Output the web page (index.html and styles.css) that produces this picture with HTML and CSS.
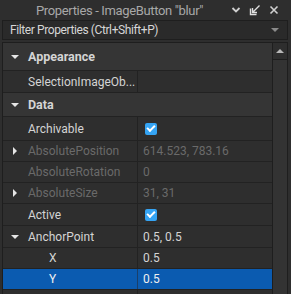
FILE: index.html
```html
<!DOCTYPE html>
<html lang="en">
<head>
  <meta charset="UTF-8" />
  <title>Properties</title>
  <link rel="stylesheet" href="styles.css">
</head>
<body>

<div class="panel">
  <div class="titlebar">
    <span class="title">Properties - ImageButton "blur"</span>
    <div class="title-icons">
      <svg width="10" height="8" viewBox="0 0 10 8"><path d="M1.5 2 L5 5.5 L8.5 2" fill="none" stroke="#d0d0d0" stroke-width="1.8"/></svg>
      <svg width="12" height="12" viewBox="0 0 12 12"><path d="M1.5 4.5 V10.5 H7.5" fill="none" stroke="#e0e0e0" stroke-width="1.4"/><path d="M3.5 8.5 L10.5 1.5 M3.5 4 V8.5 H8" fill="none" stroke="#e0e0e0" stroke-width="1.4"/></svg>
      <svg width="10" height="10" viewBox="0 0 10 10"><path d="M1.5 1.5 L8.5 8.5 M8.5 1.5 L1.5 8.5" fill="none" stroke="#d0d0d0" stroke-width="1.6"/></svg>
    </div>
  </div>

  <div class="filter">
    <span>Filter Properties (Ctrl+Shift+P)</span>
    <span class="filter-arrow"></span>
  </div>

  <div class="list">
    <div class="rows">
      <div class="row header h28">
        <div class="name"><span class="tri down"></span>Appearance</div>
      </div>
      <div class="row h22">
        <div class="name">SelectionImageOb...</div>
        <div class="value"></div>
      </div>
      <div class="row header h24">
        <div class="name"><span class="tri down"></span>Data</div>
      </div>
      <div class="row h24">
        <div class="name">Archivable</div>
        <div class="value"><span class="check"></span></div>
      </div>
      <div class="row muted">
        <div class="name"><span class="tri right"></span>AbsolutePosition</div>
        <div class="value">614.523, 783.16</div>
      </div>
      <div class="row muted">
        <div class="name">AbsoluteRotation</div>
        <div class="value">0</div>
      </div>
      <div class="row muted">
        <div class="name"><span class="tri right"></span>AbsoluteSize</div>
        <div class="value">31, 31</div>
      </div>
      <div class="row h22">
        <div class="name">Active</div>
        <div class="value"><span class="check"></span></div>
      </div>
      <div class="row h22">
        <div class="name"><span class="tri down"></span>AnchorPoint</div>
        <div class="value">0.5, 0.5</div>
      </div>
      <div class="row">
        <div class="name sub">X</div>
        <div class="value">0.5</div>
      </div>
      <div class="row selected">
        <div class="name sub">Y</div>
        <div class="value">0.5</div>
      </div>
      <div class="row">
        <div class="name"></div>
        <div class="value"></div>
      </div>
    </div>
    <div class="scrollbar">
      <div class="scroll-up"><span></span></div>
      <div class="scroll-track"></div>
    </div>
  </div>
</div>

</body>
</html>
```

FILE: styles.css
```css
html, body {
  margin: 0;
  padding: 0;
  background: #2e2e2e;
}

body {
  font-family: Roboto, 'Noto Sans', sans-serif;
  font-size: 12px;
  color: #d4d4d4;
  width: 291px;
  height: 294px;
  overflow: hidden;
}

* {
  box-sizing: border-box;
}

.panel {
  display: flex;
  flex-direction: column;
  height: 294px;
}

.titlebar {
  height: 20px;
  display: flex;
  align-items: center;
  background: #2e2e2e;
}

.title {
  padding-left: 36px;
  font-size: 13px;
  color: #a8a8a8;
  white-space: nowrap;
  letter-spacing: -0.35px;
}

.title-icons {
  margin-left: auto;
  display: flex;
  align-items: center;
  gap: 8px;
  padding-right: 12px;
}

.filter {
  margin: 0 3px 0 2px;
  height: 20px;
  border: 1px solid #1e1e1e;
  background: #2a2a2a;
  display: flex;
  align-items: center;
  padding-left: 7px;
  color: #d6d6d6;
  font-size: 12px;
  letter-spacing: -0.4px;
  white-space: nowrap;
}

.filter-arrow {
  margin-left: auto;
  margin-right: 8px;
  width: 0;
  height: 0;
  border-left: 4px solid transparent;
  border-right: 4px solid transparent;
  border-top: 4px solid #8a8a8a;
}

.list {
  margin: 2px 3px 0 2px;
  border: 1px solid #1e1e1e;
  border-bottom: none;
  display: flex;
  flex: 1;
  overflow: hidden;
}

.rows {
  flex: 1;
  display: flex;
  flex-direction: column;
}

.row {
  height: 21px;
  flex-shrink: 0;
  display: grid;
  grid-template-columns: 135px 1fr;
  border-bottom: 1px solid #222;
  background: #2e2e2e;
}

.row.h22 { height: 22px; }
.row.h24 { height: 24px; }
.row.h28 { height: 28px; }

.row.header {
  display: flex;
  background: #353535;
  font-weight: 700;
  font-size: 12.5px;
}

.name {
  display: flex;
  align-items: center;
  padding-left: 25px;
  position: relative;
  border-right: 1px solid #222;
  white-space: nowrap;
  overflow: hidden;
}

.row.header .name {
  border-right: none;
}

.name.sub {
  padding-left: 46px;
}

.value {
  display: flex;
  align-items: center;
  padding-left: 5px;
}

.muted {
  color: #6a6a6a;
}

.selected {
  background: #0b5bb0;
  color: #f0f0f0;
}

.selected .name {
  border-color: #1a3f6a;
}

.tri {
  position: absolute;
  left: 8px;
  width: 0;
  height: 0;
}

.tri.down {
  border-left: 4px solid transparent;
  border-right: 4px solid transparent;
  border-top: 4px solid #e6e6e6;
}

.tri.right {
  left: 10px;
  border-top: 4px solid transparent;
  border-bottom: 4px solid transparent;
  border-left: 4px solid #e6e6e6;
}

.check {
  width: 12px;
  height: 12px;
  border-radius: 2px;
  background: #35a4f4;
  position: relative;
  margin-left: 2px;
}

.check::after {
  content: "";
  position: absolute;
  left: 2px;
  top: 2px;
  width: 6px;
  height: 3px;
  border-left: 2px solid #fff;
  border-bottom: 2px solid #fff;
  transform: rotate(-45deg);
}

.scrollbar {
  width: 15px;
  border-left: 1px solid #1e1e1e;
  display: flex;
  flex-direction: column;
  background: #2e2e2e;
}

.scroll-up {
  height: 17px;
  border-bottom: 1px solid #1e1e1e;
  display: flex;
  align-items: center;
  justify-content: center;
}

.scroll-up span {
  width: 0;
  height: 0;
  border-left: 4px solid transparent;
  border-right: 4px solid transparent;
  border-bottom: 4px solid #b8b8b8;
}

.scroll-track {
  flex: 1;
  background: #333;
}
```
